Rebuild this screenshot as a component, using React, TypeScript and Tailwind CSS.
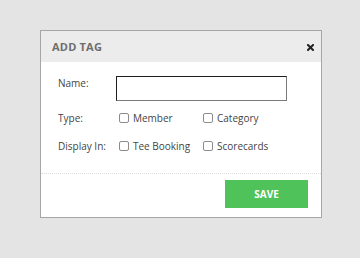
import React from 'react';

const options = [
  { label: 'Type:', items: ['Member', 'Category'] },
  { label: 'Display In:', items: ['Tee Booking', 'Scorecards'] },
];

function Box({ text }: { text: string }) {
  return (
    <label className="flex w-[84px] items-center gap-[4px]">
      <span className="h-[10px] w-[10px] shrink-0 rounded-[2px] border border-[#8c8c8c] bg-white" />
      <span>{text}</span>
    </label>
  );
}

export default function App() {
  return (
    <div
      className="h-[258px] w-[360px] bg-[#e4e4e4] pl-[40px] pt-[30px]"
      style={{ fontFamily: '"Open Sans", sans-serif' }}
    >
      <div className="flex h-[188px] w-[282px] flex-col border border-[#a6a6a6] bg-white">
        {/* Header */}
        <div className="flex h-[31px] items-center justify-between bg-[#ececec] pl-[11px] pr-[7px] pt-[1px]">
          <span className="text-[11px] font-bold tracking-[0.2px] text-[#6e6e6e]">ADD TAG</span>
          <svg width="7" height="7" viewBox="0 0 7 7">
            <path d="M1 1 L6 6 M6 1 L1 6" stroke="#222" strokeWidth="2" strokeLinecap="square" />
          </svg>
        </div>

        {/* Body */}
        <div className="flex flex-col pl-[17px] pt-[14px] text-[10px] leading-[14px] text-[#444]">
          <div className="flex items-start">
            <span className="w-[58px]">Name:</span>
            <div className="h-[25px] w-[171px] border border-t-[#1e1e1e] border-l-[#1e1e1e] border-r-[#7a7a7a] border-b-[#7a7a7a]" />
          </div>
          <div className="mt-[10px] flex flex-col gap-[14px]">
            {options.map((row) => (
              <div key={row.label} className="flex items-center">
                <span className="w-[61px]">{row.label}</span>
                {row.items.map((it) => (
                  <Box key={it} text={it} />
                ))}
              </div>
            ))}
          </div>
        </div>

        {/* Footer */}
        <div className="mt-auto border-t border-dotted border-[#dedede] pb-[9px] pr-[13px] pt-[6px]">
          <div className="flex justify-end">
            <button className="flex h-[28px] w-[83px] items-center justify-center bg-[#4fc35a] text-[10px] font-bold text-white">
              SAVE
            </button>
          </div>
        </div>
      </div>
    </div>
  );
}
